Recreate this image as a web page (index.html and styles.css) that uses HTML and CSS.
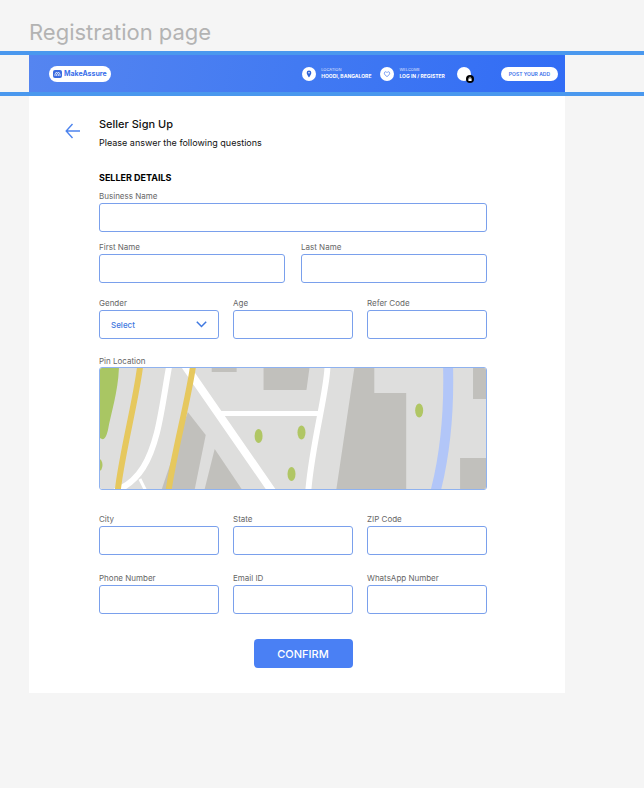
FILE: index.html
```html
<!DOCTYPE html>
<html lang="en">
<head>
<meta charset="utf-8">
<meta name="viewport" content="width=device-width, initial-scale=1">
<title>Registration page</title>
<link rel="stylesheet" href="styles.css">
</head>
<body>
<h1 class="board-title">Registration page</h1>

<div class="band">
  <header class="topbar">
    <a class="logo" href="#">
      <svg class="logo-mark" viewBox="0 0 18 16" aria-hidden="true">
        <rect width="18" height="16" rx="4" fill="#3a6be0"/>
        <path d="M4 12V8l3-4 2 3.500L11 4l3 4v4M7.300 8v4M10.700 8v4" fill="none" stroke="#fff" stroke-width="1.500"/>
      </svg>
      <span>MakeAssure</span>
    </a>
    <nav class="actions">
      <a class="action action-location" href="#">
        <span class="disc">
          <svg viewBox="0 0 14 14" aria-hidden="true">
            <path fill="#2f64d8" fill-rule="evenodd" d="M7 3.500a2.300 2.300 0 0 1 2.300 2.300C9.300 7.600 7 10.500 7 10.500S4.700 7.600 4.700 5.800A2.300 2.300 0 0 1 7 3.500zm0 1.500a.8.8 0 1 0 0 1.600.8.8 0 0 0 0-1.600z"/>
          </svg>
        </span>
        <span class="action-text"><small>LOCATION</small><b>HOODI, BANGALORE</b></span>
      </a>
      <a class="action action-login" href="#">
        <span class="disc">
          <svg viewBox="0 0 14 14" aria-hidden="true">
            <path fill="none" stroke="#5b88f0" stroke-width=".8" d="M7 9.600C5.300 8.400 4.300 7.400 4.300 6.200c0-1.600 2-2 2.700-.6.700-1.400 2.700-1 2.700.6 0 1.200-1 2.200-2.700 3.400z"/>
          </svg>
        </span>
        <span class="action-text"><small>WELCOME</small><b>LOG IN / REGISTER</b></span>
      </a>
      <a class="disc cart" href="#" aria-label="Cart">
        <svg class="cart-badge" viewBox="0 0 8 8" aria-hidden="true">
          <circle cx="4" cy="4" r="4" fill="#000"/>
          <path d="M2.400 3.400h3.200V6H2.400z" fill="#fff"/>
          <path d="M3.200 3.600V2.900a.8.800 0 0 1 1.600 0v.7" fill="none" stroke="#fff" stroke-width=".6"/>
        </svg>
      </a>
      <button class="post" type="button">POST YOUR ADD</button>
    </nav>
  </header>
</div>

<main class="card">
  <div class="intro">
    <a class="back" href="#" aria-label="Back">
      <svg viewBox="0 0 16 16" aria-hidden="true">
        <path d="M15 8H1.500M7.500 1L1.200 8l6.300 7" fill="none" stroke="#4d84ee" stroke-width="1.400"/>
      </svg>
    </a>
    <div>
      <h2 class="heading">Seller Sign Up</h2>
      <p class="lead">Please answer the following questions</p>
    </div>
  </div>

  <form class="form">
    <h3 class="section-title">SELLER DETAILS</h3>
    <div class="field">
      <label for="business">Business Name</label>
      <input id="business" type="text">
    </div>
    <div class="row row-names">
      <div class="field"><label for="first">First Name</label><input id="first" type="text"></div>
      <div class="field"><label for="last">Last Name</label><input id="last" type="text"></div>
    </div>
    <div class="row row-personal">
      <div class="field">
        <label for="gender">Gender</label>
        <div class="select">
          <select id="gender"><option>Select</option></select>
          <svg class="chevron" viewBox="0 0 11 7" aria-hidden="true"><path d="M.8.800L5.500 5.500 10.200.8" fill="none" stroke="#3f78e0" stroke-width="1.500"/></svg>
        </div>
      </div>
      <div class="field"><label for="age">Age</label><input id="age" type="text"></div>
      <div class="field"><label for="refer">Refer Code</label><input id="refer" type="text"></div>
    </div>
    <div class="location">
      <span class="caption" id="pin">Pin Location</span>
      <div class="map-frame">
      <svg class="map" viewBox="0 0 387 121" preserveAspectRatio="none" role="img" aria-labelledby="pin">
        <rect width="387" height="121" fill="#dededd"/>
        <g fill="#c1c0bc">
          <path d="M112 0h25v4h-25z"/>
          <path d="M164 0h46l-3 22h-43z"/>
          <path d="M255 0h20v25h32v96h-70z"/>
          <path d="M374 0h13v31h-13z"/>
          <path d="M361 90h26v31h-26z"/>
          <path d="M88 44L106 67 95 121H62z"/>
          <path d="M115 81L142 121H105z"/>
        </g>
        <path d="M0 0H19C18 25 11 45 8 62 6 70 4 73 0 70z" fill="#a9c663"/>
        <g fill="#b0c664">
          <ellipse cx="159" cy="68" rx="4" ry="7"/>
          <ellipse cx="202" cy="64.500" rx="4" ry="7"/>
          <ellipse cx="192" cy="106" rx="4" ry="7"/>
          <ellipse cx="320" cy="42.500" rx="4" ry="7"/>
          <ellipse cx="-1" cy="97" rx="3.500" ry="6"/>
        </g>
        <path d="M349 -4V0C350 45 346 85 337 121L336 125" fill="none" stroke="#b2c6f8" stroke-width="10"/>
        <g fill="none" stroke="#fff">
          <path d="M70 -6L69 0C65 22 62 45 57 65 50 92 40 111 20 121L12 125" stroke-width="6"/>
          <path d="M40 111L47 125" stroke-width="3"/>
          <path d="M83 -6L87 0 171 121 175 127" stroke-width="8"/>
          <path d="M121 45.500H220" stroke-width="5"/>
          <path d="M228 -4V0C227 25 213 75 209 121V125" stroke-width="6"/>
        </g>
        <g fill="none" stroke="#e6c85e" stroke-width="6">
          <path d="M40.500 -4L40 0C36 32 22 86 18 121L17.500 125"/>
          <path d="M93.500 -4L93 0C88 34 74 86 69 121L68.500 125"/>
        </g>
      </svg>
      </div>
    </div>
    <div class="row row-address">
      <div class="field"><label for="city">City</label><input id="city" type="text"></div>
      <div class="field"><label for="state">State</label><input id="state" type="text"></div>
      <div class="field"><label for="zip">ZIP Code</label><input id="zip" type="text"></div>
    </div>
    <div class="row row-contact">
      <div class="field"><label for="phone">Phone Number</label><input id="phone" type="tel"></div>
      <div class="field"><label for="email">Email ID</label><input id="email" type="email"></div>
      <div class="field"><label for="whatsapp">WhatsApp Number</label><input id="whatsapp" type="tel"></div>
    </div>
    <div class="row row-submit">
      <button class="confirm" type="submit">CONFIRM</button>
    </div>
  </form>
</main>
</body>
</html>
```
FILE: styles.css
```css
* {
  box-sizing: border-box;
}

body {
  margin: 0;
  background: #f5f5f5;
  color: #111;
  font-family: Inter, "Liberation Sans", sans-serif;
}

a {
  color: inherit;
  text-decoration: none;
}

h1, h2, h3, p {
  margin: 0;
}

.board-title {
  padding: 18px 29px 5px;
  color: #b3b3b3;
  font-size: 22px;
  line-height: 28px;
  font-weight: 400;
}

.band {
  padding: 0 79px 0 29px;
  border-top: 4px solid #4a98ee;
  border-bottom: 4px solid #4a98ee;
}

.topbar {
  display: flex;
  align-items: center;
  justify-content: space-between;
  height: 37px;
  padding: 0 7px 0 20px;
  background: linear-gradient(100deg, #5585f0, #427af2 50%, #316cf5);
  color: #fff;
}

.logo {
  display: flex;
  align-items: center;
  gap: 2px;
  height: 16px;
  padding: 0 4px;
  border-radius: 8px;
  background: #fff;
  color: #3a70ea;
  font-size: 7px;
  font-weight: 700;
}

.logo-mark {
  width: 9px;
  height: 8px;
}

.actions,
.action {
  display: flex;
  align-items: center;
}

.action {
  gap: 5px;
}

.action-location {
  margin-right: 9px;
}

.action-login {
  margin-right: 12px;
}

.disc {
  display: block;
  width: 14px;
  height: 14px;
  border-radius: 50%;
  background: #fff;
}

.disc svg {
  display: block;
}

.action-text {
  display: grid;
  font-size: 5px;
  line-height: 7px;
  white-space: nowrap;
}

.action-text small {
  font-size: 4px;
  line-height: 6px;
  opacity: 0.8;
}

.cart {
  position: relative;
  margin-right: 30px;
}

.cart-badge {
  position: absolute;
  right: -3px;
  bottom: -2px;
  width: 8px;
  height: 8px;
}

.post {
  height: 14px;
  margin-top: 1px;
  padding: 0 8px;
  border: 0;
  border-radius: 8px;
  background: #fff;
  color: #3a70ea;
  font: 600 5px/14px Inter, sans-serif;
}

.card {
  margin: 0 79px 0 29px;
  padding: 20px 78px 25px 36px;
  background: #fff;
}

.intro {
  display: flex;
  gap: 18px;
}

.back {
  width: 16px;
  height: 16px;
  margin-top: 7px;
}

.back svg {
  display: block;
}

.heading {
  font-size: 11px;
  line-height: 16px;
  font-weight: 500;
}

.lead {
  padding-top: 4px;
  font-size: 9px;
  line-height: 14px;
}

.form {
  padding: 21px 0 0 34px;
}

.section-title {
  padding-bottom: 5px;
  color: #000;
  font-size: 9px;
  line-height: 14px;
  font-weight: 700;
}

.field {
  display: grid;
  gap: 1px;
  min-width: 0;
}

label,
.caption {
  display: block;
  color: #666;
  font-size: 8px;
  line-height: 12px;
}

input,
select {
  width: 100%;
  min-width: 0;
  height: 29px;
  margin: 0;
  padding: 0 11px;
  border: 1px solid #7aa0ec;
  border-radius: 3px;
  background: #fff;
  color: #3f78e0;
  font: 500 8px/12px Inter, sans-serif;
  appearance: none;
}

.select {
  position: relative;
}

.chevron {
  position: absolute;
  top: 11px;
  right: 12px;
  width: 11px;
  height: 7px;
  pointer-events: none;
}

.row {
  display: grid;
  grid-template-columns: repeat(3, 1fr);
  gap: 14px;
}

.row-names {
  grid-template-columns: repeat(2, 1fr);
  gap: 16px;
  margin-top: 9px;
}

.row-personal {
  margin-top: 14px;
}

.location {
  margin-top: 16px;
}

.map-frame {
  overflow: hidden;
  border: 1px solid #8fb2ef;
  border-radius: 3px;
}

.map {
  display: block;
  width: 100%;
  height: 121px;
}

.row-address {
  margin-top: 23px;
}

.row-contact {
  margin-top: 17px;
}

.row-submit {
  display: flex;
  justify-content: center;
  margin-top: 25px;
  padding-left: 20px;
}

.confirm {
  width: 99px;
  height: 29px;
  padding: 2px 0 0;
  border: 0;
  border-radius: 4px;
  background: #4a80f4;
  color: #fff;
  font: 500 11px/27px Inter, sans-serif;
}
```
